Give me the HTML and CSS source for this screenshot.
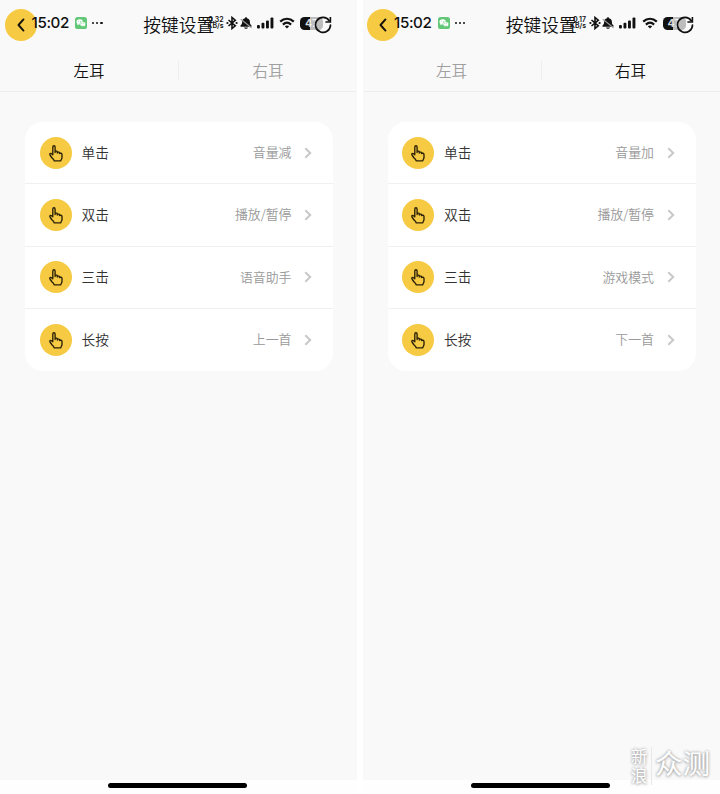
FILE: index.html
```html
<!DOCTYPE html>
<html lang="zh-CN">
<head>
<meta charset="utf-8">
<title>按键设置</title>
<link rel="stylesheet" href="styles.css">
</head>
<body>
<svg class="defs" aria-hidden="true">
  <symbol id="hand" viewBox="0 0 16 18"><path d="M4.800 10.300V3.200c0-1.900 2.300-1.900 2.300 0v3.900l1.900.1.400.9 1.700.1.500.8 2 .5.400 1v3.100c0 1.200-1.100 2-1.200 3.200H6.200c-.2-1.200-1.400-2-2.500-3.300L2 11c-.7-1.100.5-2.100 1.500-1.300l1.300 1.100M7.100 7v1.600M9.300 7.700v1.300M11.500 8.300v1.300" fill="none" stroke="#2b2108" stroke-width="1.35" stroke-linejoin="round" stroke-linecap="round"/></symbol>
  <symbol id="next" viewBox="0 0 8 12"><path d="M1.300 1.200 6.200 6l-4.900 4.800" fill="none" stroke="#c8c8c8" stroke-width="2"/></symbol>
  <symbol id="back" viewBox="0 0 8 14"><path d="M6.500 1.400 1.500 7l5 5.600" fill="none" stroke="#15130c" stroke-width="1.9" stroke-linecap="round" stroke-linejoin="round"/></symbol>
  <symbol id="wechat" viewBox="0 0 12 12"><rect width="12" height="12" rx="2.6" fill="#62c878"/><ellipse cx="4.7" cy="4.8" rx="3.2" ry="2.6" fill="#fff"/><path d="m2.7 6.5-.5 1.7 2-.9z" fill="#fff"/><ellipse cx="7.8" cy="7" rx="2.9" ry="2.3" fill="#fff" stroke="#62c878" stroke-width=".5"/><path d="m8.8 8.6 1.3 1-.2-1.6z" fill="#fff"/><g fill="#62c878"><circle cx="3.7" cy="4.2" r=".45"/><circle cx="5.7" cy="4.2" r=".45"/><circle cx="6.9" cy="6.5" r=".4"/><circle cx="8.7" cy="6.5" r=".4"/></g></symbol>
  <symbol id="bluetooth" viewBox="0 0 12 14"><path d="m2.500 4 6.800 5.800L6 12.500v-11l3.300 2.700-6.800 5.800" fill="none" stroke="#111" stroke-width="1.600"/><circle cx="1.400" cy="7" r="1.100" fill="#111"/><circle cx="10.600" cy="7" r="1.100" fill="#111"/></symbol>
  <symbol id="mute" viewBox="0 0 12 14"><path d="M6 1.200c.7 0 1 .4 1 1 1.800.5 2.900 1.800 2.900 3.600 0 2.200.4 2.800 1.600 3.800v1.200H.5V9.600c1.200-1 1.600-1.600 1.600-3.800C2.100 4 3.200 2.700 5 2.200c0-.6.300-1 1-1zM4 11.500h4c-.5 1.700-3.500 1.700-4 0z" fill="#111"/><path d="M.8 3.300 11.500 11.800" stroke="#999" stroke-width="1.100"/></symbol>
  <symbol id="signal" viewBox="0 0 17 12"><g fill="#111"><rect x="0" y="8" width="2.900" height="3.500" rx="1"/><rect x="4.500" y="5.800" width="2.900" height="5.700" rx="1"/><rect x="9" y="3.400" width="2.900" height="8.100" rx="1"/><rect x="13.500" y=".5" width="2.900" height="11" rx="1"/></g></symbol>
  <symbol id="wifi" viewBox="0 0 16 12"><g fill="none" stroke="#111" stroke-width="2.200"><path d="M1.200 4.600c4-3.800 9.600-3.800 13.600 0"/><path d="M3.900 7.600c2.500-2.300 5.700-2.300 8.200 0"/></g><path d="M5.800 9.200c1.300-1.100 3.100-1.100 4.400 0L8 11.500z" fill="#111"/></symbol>
  <symbol id="refresh" viewBox="0 0 18 18"><path d="M15.200 4.700A7.500 7.500 0 1 0 16.500 9" fill="none" stroke="#111" stroke-width="1.700" stroke-linecap="round"/><path d="M16.400 1v5h-5" fill="none" stroke="#111" stroke-width="1.600"/></symbol>
</svg>
<main class="screens">
  <section class="phone">
    <header class="top">
      <div class="status">
        <span class="clock">15:02</span>
        <svg class="wechat"><use href="#wechat"/></svg>
        <span class="dots"><i></i><i></i><i></i></span>
        <span class="speed"><span>0.32</span><span>KB/s</span></span>
        <svg class="bluetooth"><use href="#bluetooth"/></svg>
        <svg class="mute"><use href="#mute"/></svg>
        <svg class="signal"><use href="#signal"/></svg>
        <svg class="wifi"><use href="#wifi"/></svg>
        <span class="battery">47</span>
      </div>
      <div class="appbar">
        <span class="back"><svg><use href="#back"/></svg></span>
        <h1>按键设置</h1>
        <svg class="refresh"><use href="#refresh"/></svg>
      </div>
    </header>
    <nav class="tabs"><span class="tab on">左耳</span><span class="tab">右耳</span></nav>
    <ul class="card">
      <li><span class="icon"><svg><use href="#hand"/></svg></span><span class="label">单击</span><span class="value">音量减</span><svg class="next"><use href="#next"/></svg></li>
      <li><span class="icon"><svg><use href="#hand"/></svg></span><span class="label">双击</span><span class="value">播放/暂停</span><svg class="next"><use href="#next"/></svg></li>
      <li><span class="icon"><svg><use href="#hand"/></svg></span><span class="label">三击</span><span class="value">语音助手</span><svg class="next"><use href="#next"/></svg></li>
      <li><span class="icon"><svg><use href="#hand"/></svg></span><span class="label">长按</span><span class="value">上一首</span><svg class="next"><use href="#next"/></svg></li>
    </ul>
    <footer class="home"><span></span></footer>
  </section>
  <section class="phone">
    <header class="top">
      <div class="status">
        <span class="clock">15:02</span>
        <svg class="wechat"><use href="#wechat"/></svg>
        <span class="dots"><i></i><i></i><i></i></span>
        <span class="speed"><span>0.17</span><span>KB/s</span></span>
        <svg class="bluetooth"><use href="#bluetooth"/></svg>
        <svg class="mute"><use href="#mute"/></svg>
        <svg class="signal"><use href="#signal"/></svg>
        <svg class="wifi"><use href="#wifi"/></svg>
        <span class="battery">47</span>
      </div>
      <div class="appbar">
        <span class="back"><svg><use href="#back"/></svg></span>
        <h1>按键设置</h1>
        <svg class="refresh"><use href="#refresh"/></svg>
      </div>
    </header>
    <nav class="tabs"><span class="tab">左耳</span><span class="tab on">右耳</span></nav>
    <ul class="card">
      <li><span class="icon"><svg><use href="#hand"/></svg></span><span class="label">单击</span><span class="value">音量加</span><svg class="next"><use href="#next"/></svg></li>
      <li><span class="icon"><svg><use href="#hand"/></svg></span><span class="label">双击</span><span class="value">播放/暂停</span><svg class="next"><use href="#next"/></svg></li>
      <li><span class="icon"><svg><use href="#hand"/></svg></span><span class="label">三击</span><span class="value">游戏模式</span><svg class="next"><use href="#next"/></svg></li>
      <li><span class="icon"><svg><use href="#hand"/></svg></span><span class="label">长按</span><span class="value">下一首</span><svg class="next"><use href="#next"/></svg></li>
    </ul>
    <footer class="home"><span></span></footer>
  </section>
  <div class="mark"><span class="sina">新浪</span><span class="test">众测</span></div>
</main>
</body>
</html>
```
FILE: styles.css
```css
* { box-sizing: border-box; }
body {
  margin: 0;
  background: #fff;
  font-family: "Noto Sans CJK SC", sans-serif;
  font-weight: 350;
  color: #111;
}
svg { display: block; flex: none; }
.defs { position: absolute; width: 0; height: 0; }
.screens {
  position: relative;
  display: flex;
  gap: 5.5px;
  width: 720px;
  height: 794px;
  overflow: hidden;
}
.phone {
  display: flex;
  flex-direction: column;
  flex: none;
  width: 357px;
  height: 794px;
  background: #f9f9f9;
}
.top { position: relative; height: 50px; }
.status {
  position: relative;
  z-index: 1;
  display: flex;
  align-items: center;
  height: 46px;
  padding-left: 31.5px;
}
.clock {
  width: 38px;
  font: 500 15.2px/20px Inter, sans-serif;
  letter-spacing: -0.4px;
  white-space: nowrap;
}
.wechat { width: 12px; height: 12px; margin-left: 5.5px; }
.dots { display: flex; gap: 2px; margin-left: 5px; width: 110px; }
.dots i { width: 2.2px; height: 2.2px; border-radius: 50%; background: #111; }
.speed {
  display: flex;
  flex-direction: column;
  align-items: flex-end;
  width: 21.5px;
  font: 600 7px/6.5px Inter, sans-serif;
}
.bluetooth { width: 12px; height: 14px; margin-left: 2.5px; }
.mute { width: 12px; height: 14px; margin-left: 1.5px; }
.signal { width: 17px; height: 12px; margin-left: 5px; }
.wifi { width: 16px; height: 12px; margin-left: 5.5px; }
.battery {
  width: 23px;
  height: 13px;
  margin-left: 5px;
  padding-left: 5px;
  border-radius: 4.5px;
  background: linear-gradient(90deg, #111 10px, #bdbdbd 10px);
  color: rgba(255, 255, 255, 0.85);
  font: 700 10.5px/13px Inter, sans-serif;
}
.appbar {
  position: absolute;
  inset: 0;
  display: flex;
  align-items: center;
  justify-content: space-between;
  padding: 0 25px 0 4.5px;
}
.back {
  display: flex;
  align-items: center;
  justify-content: center;
  width: 32px;
  height: 32px;
  border-radius: 50%;
  background: #f6ca43;
}
.back svg { width: 8px; height: 14px; }
.appbar h1 { margin: -2px 0 0 7px; font-size: 17.7px; font-weight: 350; line-height: 26px; }
.refresh { position: relative; z-index: 2; width: 18px; height: 18px; }
.tabs {
  display: flex;
  align-items: center;
  height: 42px;
  border-bottom: 1px solid #eee;
}
.tab { flex: 1; text-align: center; font-size: 15.5px; line-height: 18px; padding-bottom: 2px; color: #a0a0a0; }
.tab + .tab { border-left: 1px solid #eee; }
.tab.on { color: #111; }
.card {
  width: 308px;
  margin: 30px 0 0 25px;
  padding: 0;
  list-style: none;
  border-radius: 18px;
  background: #fff;
}
.card li {
  display: flex;
  align-items: center;
  height: 62.5px;
  padding: 0 21px 0 14.5px;
  border-bottom: 1px solid #f0f0f0;
}
.card li:first-child { height: 62px; }
.card li:last-child { border-bottom: 0; height: 61.5px; }
.icon {
  display: flex;
  align-items: center;
  justify-content: center;
  width: 32px;
  height: 32px;
  border-radius: 50%;
  background: #f6ca43;
}
.icon svg { width: 16px; height: 18px; }
.label { margin: 0 0 2px 10px; font-size: 13.7px; color: #333; }
.value { margin: 0 0 2px auto; font-size: 12.9px; color: #999; }
.next { width: 8px; height: 12px; margin-left: 12.5px; }
.home {
  height: 14px;
  margin-top: auto;
  padding: 3px 0 0 108px;
  background: #fefefe;
}
.home span { display: block; width: 139px; height: 5px; border-radius: 3px; background: #000; }
.mark {
  position: absolute;
  left: 631px;
  top: 747px;
  display: flex;
  align-items: center;
  color: #fff;
  text-shadow: 0 0 3px #999, 0 1px 3px #bbb;
}
.sina { width: 21px; height: 38px; font-size: 16.5px; font-weight: 400; line-height: 19px; border-right: 1px solid #e8e8e8; }
.test { margin: -8px 0 0 3px; font-size: 27.5px; font-weight: 400; line-height: 34px; white-space: nowrap; }
```
